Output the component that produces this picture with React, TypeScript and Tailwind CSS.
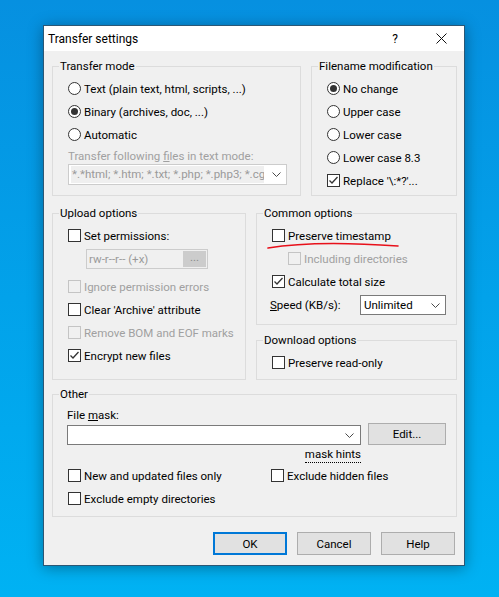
import type { ReactNode } from 'react';

const font = { fontFamily: "Roboto, 'Noto Sans', sans-serif" };

function Chevron() {
  return (
    <svg width="9" height="5" viewBox="0 0 9 5" className="shrink-0">
      <path d="M0.5 0.5 L4.5 4.5 L8.5 0.5" fill="none" stroke="#4a4a4a" strokeWidth="1" />
    </svg>
  );
}

function Check({ checked = false, disabled = false }: { checked?: boolean; disabled?: boolean }) {
  return (
    <span
      className={`w-[13px] h-[13px] shrink-0 border flex items-center justify-center ${
        disabled ? 'border-[#c4c4c4] bg-[#f0f0f0]' : 'border-[#333333] bg-white'
      }`}
    >
      {checked && (
        <svg width="11" height="11" viewBox="0 0 11 11">
          <path d="M1.5 5.5 L4 8 L9.5 2" fill="none" stroke="#333333" strokeWidth="1.3" />
        </svg>
      )}
    </span>
  );
}

function Radio({ selected = false }: { selected?: boolean }) {
  return (
    <span className="w-[13px] h-[13px] shrink-0 rounded-full border border-[#333333] bg-white flex items-center justify-center">
      {selected && <span className="w-[7px] h-[7px] rounded-full bg-[#333333]" />}
    </span>
  );
}

function Row({ children, className = '' }: { children: ReactNode; className?: string }) {
  return <div className={`h-[23px] flex items-center ${className}`}>{children}</div>;
}

function CheckRow({
  label,
  checked,
  disabled,
  className = '',
}: {
  label: ReactNode;
  checked?: boolean;
  disabled?: boolean;
  className?: string;
}) {
  return (
    <Row className={className}>
      <Check checked={checked} disabled={disabled} />
      <span className={`ml-[3px] whitespace-nowrap ${disabled ? 'text-[#a0a0a0]' : 'text-black'}`}>{label}</span>
    </Row>
  );
}

function RadioRow({ label, selected }: { label: string; selected?: boolean }) {
  return (
    <Row>
      <Radio selected={selected} />
      <span className="ml-[3px] whitespace-nowrap">{label}</span>
    </Row>
  );
}

function Group({ title, className = '', children }: { title: string; className?: string; children: ReactNode }) {
  return (
    <fieldset className={`border border-[#dcdcdc] pl-[15px] pr-[9px] pt-[3px] min-w-0 ${className}`}>
      <legend className="-ml-[9px] px-px leading-4 whitespace-nowrap">{title}</legend>
      {children}
    </fieldset>
  );
}

function Button({ label, primary = false }: { label: string; primary?: boolean }) {
  return (
    <button
      className={`w-[74px] h-[23px] bg-[#e1e1e1] flex items-center justify-center ${
        primary ? 'border-2 border-[#0078d7]' : 'border border-[#adadad]'
      }`}
    >
      {label}
    </button>
  );
}

export default function App() {
  return (
    <div
      className="w-[499px] h-[597px] overflow-hidden bg-gradient-to-b from-[#0690e0] via-[#02a2ea] to-[#00b2f3] pt-[25px] pl-[43px] text-[11.5px] leading-4 text-black"
      style={font}
    >
      <div className="relative w-[422px] h-[541px] border border-[#2b5775] bg-[#f0f0f0] flex flex-col shadow-[0_2px_14px_rgba(0,0,0,0.35)]">
        {/* title bar */}
        <div className="h-[25px] bg-white flex items-center text-[12px]">
          <span className="pl-[4px] flex-1">Transfer settings</span>
          <span className="w-[46px] h-full flex items-center justify-center">?</span>
          <span className="w-[46px] h-full flex items-center justify-center">
            <svg width="11" height="11" viewBox="0 0 11 11">
              <path d="M0.5 0.5 L10.5 10.5 M10.5 0.5 L0.5 10.5" stroke="#111" strokeWidth="1" />
            </svg>
          </span>
        </div>

        <div className="flex-1 pl-[8px] pr-[7px] pt-[7px]">
          {/* row 1 */}
          <div className="flex gap-[10px]">
            <Group title="Transfer mode" className="w-[249px] pb-[10px]">
              <RadioRow label="Text (plain text, html, scripts, ...)" />
              <RadioRow label="Binary (archives, doc, ...)" selected />
              <RadioRow label="Automatic" />
              <div className="mt-[2px] h-4 text-[#a0a0a0] whitespace-nowrap">
                Transfer following <span className="underline">f</span>iles in text mode:
              </div>
              <div className="h-[21px] w-[219px] border border-[#cccccc] bg-white flex items-center pl-[2px] pr-[5px]">
                <span className="w-[193px] h-[17px] bg-[#efefef] text-[#9a9a9a] overflow-hidden whitespace-nowrap leading-[17px] pl-px">
                  *.*html; *.htm; *.txt; *.php; *.php3; *.cgi
                </span>
                <span className="flex-1 flex justify-end">
                  <Chevron />
                </span>
              </div>
            </Group>
            <Group title="Filename modification" className="w-[146px]">
              <RadioRow label="No change" selected />
              <RadioRow label="Upper case" />
              <RadioRow label="Lower case" />
              <RadioRow label="Lower case 8.3" />
              <CheckRow label={"Replace '\\:*?'..."} checked />
            </Group>
          </div>

          {/* row 2 */}
          <div className="flex gap-[10px] mt-[9px]">
            <Group title="Upload options" className="w-[194px] pb-[11px]">
              <CheckRow label="Set permissions:" />
              <div className="ml-[18px] mt-[2px] h-[20px] w-[122px] border border-[#cccccc] bg-[#f0f0f0] flex items-center pl-[2px] pr-px">
                <span className="flex-1 text-[#9a9a9a] whitespace-nowrap">rw-r--r-- (+x)</span>
                <span className="w-[23px] h-[16px] bg-[#cccccc] text-[#8a8a8a] flex items-center justify-center leading-none pb-[3px]">
                  ...
                </span>
              </div>
              <CheckRow label="Ignore permission errors" disabled className="mt-[6px]" />
              <CheckRow label="Clear 'Archive' attribute" />
              <CheckRow label="Remove BOM and EOF marks" disabled />
              <CheckRow label="Encrypt new files" checked />
            </Group>
            <div className="w-[201px] flex flex-col">
              <Group title="Common options" className="pb-[9px]">
                <CheckRow label="Preserve timestamp" />
                <CheckRow label="Including directories" disabled className="pl-[16px]" />
                <CheckRow label="Calculate total size" checked />
                <div className="mt-[2px] h-[20px] flex items-center">
                  <span className="w-[90px] -ml-[2px] whitespace-nowrap">
                    <span className="underline">S</span>peed (KB/s):
                  </span>
                  <div className="w-[86px] h-[20px] border border-[#7a7a7a] bg-white flex items-center pl-[3px] pr-[5px]">
                    <span className="flex-1">Unlimited</span>
                    <Chevron />
                  </div>
                </div>
              </Group>
              <Group title="Download options" className="mt-[7px] pb-[5px] flex-1">
                <CheckRow label="Preserve read-only" />
              </Group>
            </div>
          </div>

          {/* other */}
          <Group title="Other" className="mt-[6px] pb-[6px] !pt-[5px]">
            <div className="flex items-end gap-[7px]">
              <div className="flex flex-col">
                <div className="h-4 -ml-px">
                  File <span className="underline">m</span>ask:
                </div>
                <div className="mt-[2px] h-[20px] w-[294px] -ml-px border border-[#7a7a7a] bg-white flex items-center justify-end pr-[6px]">
                  <Chevron />
                </div>
              </div>
              <div className="w-[78px] h-[22px] border border-[#adadad] bg-[#e1e1e1] flex items-center justify-center">
                Edit...
              </div>
            </div>
            <div className="w-[293px] flex justify-end mt-[2px]">
              <span className="border-b border-dotted border-black leading-[15px]">mask hints</span>
            </div>
            <div className="grid grid-cols-[203px_1fr] mt-[1px]">
              <CheckRow label="New and updated files only" />
              <CheckRow label="Exclude hidden files" />
              <CheckRow label="Exclude empty directories" />
            </div>
          </Group>

          {/* buttons */}
          <div className="mt-[15px] flex justify-end gap-[10px] pr-[2px]">
            <Button label="OK" primary />
            <Button label="Cancel" />
            <Button label="Help" />
          </div>
        </div>

        {/* hand-drawn red underline */}
        <svg className="absolute left-0 top-0 pointer-events-none" width="422" height="541" viewBox="0 0 422 541">
          <path d="M224 222 Q271 214 354 220" fill="none" stroke="#e8101a" strokeWidth="1.6" strokeLinecap="round" />
        </svg>
      </div>
    </div>
  );
}
